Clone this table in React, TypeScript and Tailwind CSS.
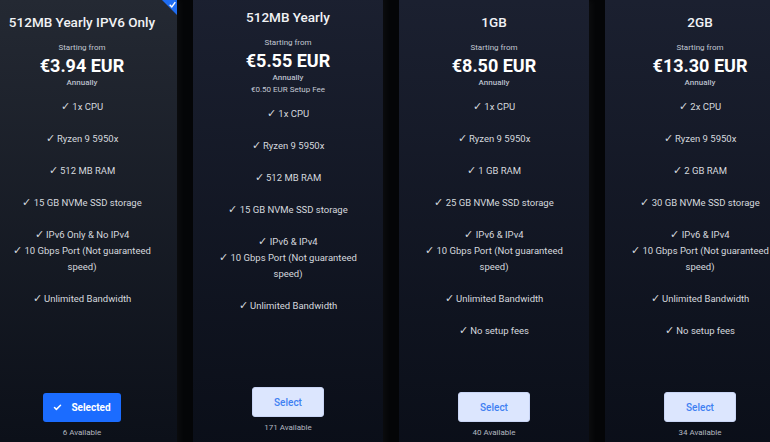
import { Check } from "lucide-react"

type Plan = {
  name: string
  price: string
  setupFee?: string
  features: string[][]
  available: number
  selected?: boolean
  raised?: boolean
}

const plans: Plan[] = [
  {
    name: "512MB Yearly IPV6 Only",
    price: "€3.94 EUR",
    features: [
      ["1x CPU"],
      ["Ryzen 9 5950x"],
      ["512 MB RAM"],
      ["15 GB NVMe SSD storage"],
      ["IPv6 Only & No IPv4", "10 Gbps Port (Not guaranteed speed)"],
      ["Unlimited Bandwidth"],
    ],
    available: 6,
    selected: true,
  },
  {
    name: "512MB Yearly",
    price: "€5.55 EUR",
    setupFee: "€0.50 EUR Setup Fee",
    features: [
      ["1x CPU"],
      ["Ryzen 9 5950x"],
      ["512 MB RAM"],
      ["15 GB NVMe SSD storage"],
      ["IPv6 & IPv4", "10 Gbps Port (Not guaranteed speed)"],
      ["Unlimited Bandwidth"],
    ],
    available: 171,
    raised: true,
  },
  {
    name: "1GB",
    price: "€8.50 EUR",
    features: [
      ["1x CPU"],
      ["Ryzen 9 5950x"],
      ["1 GB RAM"],
      ["25 GB NVMe SSD storage"],
      ["IPv6 & IPv4", "10 Gbps Port (Not guaranteed speed)"],
      ["Unlimited Bandwidth"],
      ["No setup fees"],
    ],
    available: 40,
  },
  {
    name: "2GB",
    price: "€13.30 EUR",
    features: [
      ["2x CPU"],
      ["Ryzen 9 5950x"],
      ["2 GB RAM"],
      ["30 GB NVMe SSD storage"],
      ["IPv6 & IPv4", "10 Gbps Port (Not guaranteed speed)"],
      ["Unlimited Bandwidth"],
      ["No setup fees"],
    ],
    available: 34,
  },
]

const PlanCard = ({ plan }: { plan: Plan }) => (
  <div
    className={`relative flex h-[460px] w-[190px] shrink-0 flex-col items-center overflow-hidden pb-[22px] pt-[13px] text-center shadow-[4px_0_6px_rgba(255,255,255,0.03)] ${
      plan.selected
        ? "bg-gradient-to-b from-[#242933] to-[#0b0f18]"
        : "bg-gradient-to-b from-[#1b2030] to-[#0a0e18]"
    } ${plan.raised ? "-translate-y-[5px]" : ""}`}
  >
    {/* corner ribbon */}
    {plan.selected && (
      <div className="absolute right-0 top-0 h-0 w-0 border-l-[15px] border-t-[15px] border-l-transparent border-t-[#1f6df2]">
        <svg
          viewBox="0 0 10 10"
          className="absolute -top-[14px] right-[1px] h-[7px] w-[7px]"
          fill="none"
          stroke="white"
          strokeWidth="2"
        >
          <path d="M1 5.5 L4 8.5 L9 1.5" />
        </svg>
      </div>
    )}

    <h3 className="text-[13.5px] font-medium leading-[18px] text-[#f1f2f5]">{plan.name}</h3>

    <p className="mt-[11px] text-[8px] leading-[12px] text-[#c3c8d3]">Starting from</p>
    <p className="mt-[1px] text-[18px] font-bold leading-[22px] text-white">{plan.price}</p>
    <p className="text-[8px] font-medium leading-[12px] text-[#b9bfca]">Annually</p>
    {plan.setupFee && (
      <p className="text-[8px] leading-[12px] text-[#c3c8d3]">{plan.setupFee}</p>
    )}

    {/* Features */}
    <div className="mt-[10px] w-full space-y-4 px-[24px] text-[9.5px] leading-4 text-[#d5d8de]">
      {plan.features.map((lines, i) => (
        <div key={i}>
          {lines.map((line) => (
            <p key={line}>
              <span className="text-[11px] leading-4">✓</span> {line}
            </p>
          ))}
        </div>
      ))}
    </div>

    <div className="mt-auto flex flex-col items-center">
      {plan.selected ? (
        <button className="flex h-[29px] w-[78px] items-center justify-center gap-[9px] rounded-[3px] bg-[#1b6cff] text-[10px] font-bold text-white">
          <Check className="h-[9px] w-[9px]" strokeWidth={4} />
          Selected
        </button>
      ) : (
        <button className="h-[30px] w-[72px] rounded-[3px] border border-[#c9d5f5] bg-[#dce6fe] text-[10px] font-medium text-[#3f80f2]">
          Select
        </button>
      )}
      <p className="mt-[6px] text-[8px] leading-[10px] text-[#b3b7c0]">
        {plan.available} Available
      </p>
    </div>
  </div>
)

export default function App() {
  return (
    <div
      className="h-[442px] w-[770px] overflow-hidden bg-[#040507]"
      style={{ fontFamily: "Roboto, 'Liberation Sans', sans-serif" }}
    >
      <div className="-ml-[13px] flex gap-[16px]">
        {plans.map((plan) => (
          <PlanCard key={plan.name} plan={plan} />
        ))}
      </div>
    </div>
  )
}
